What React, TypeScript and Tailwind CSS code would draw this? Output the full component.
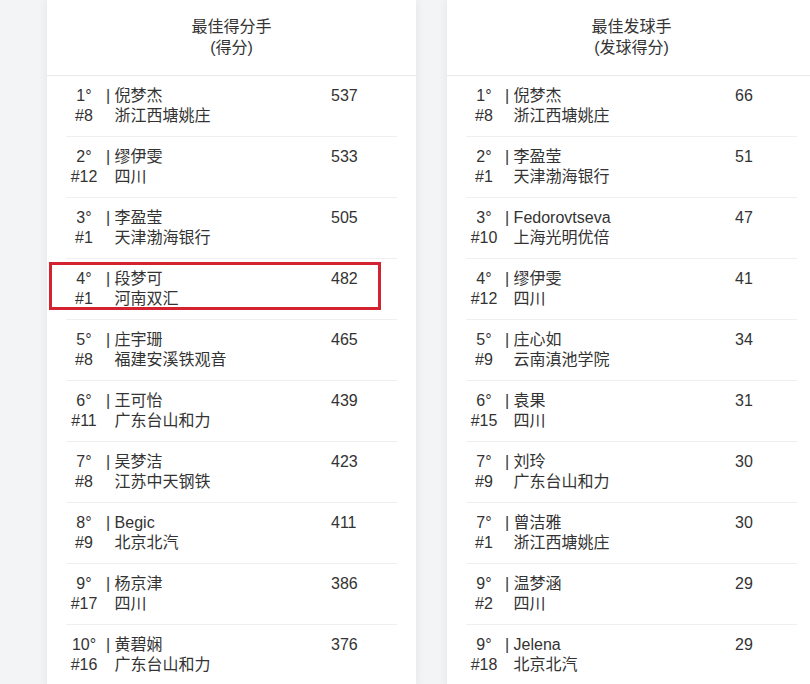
import React from "react";

type Row = { rank: string; num: string; name: string; team: string; score: string; hl?: boolean };

const left: Row[] = [
  { rank: "1°", num: "#8", name: "倪梦杰", team: "浙江西塘姚庄", score: "537" },
  { rank: "2°", num: "#12", name: "缪伊雯", team: "四川", score: "533" },
  { rank: "3°", num: "#1", name: "李盈莹", team: "天津渤海银行", score: "505" },
  { rank: "4°", num: "#1", name: "段梦可", team: "河南双汇", score: "482", hl: true },
  { rank: "5°", num: "#8", name: "庄宇珊", team: "福建安溪铁观音", score: "465" },
  { rank: "6°", num: "#11", name: "王可怡", team: "广东台山和力", score: "439" },
  { rank: "7°", num: "#8", name: "吴梦洁", team: "江苏中天钢铁", score: "423" },
  { rank: "8°", num: "#9", name: "Begic", team: "北京北汽", score: "411" },
  { rank: "9°", num: "#17", name: "杨京津", team: "四川", score: "386" },
  { rank: "10°", num: "#16", name: "黄碧娴", team: "广东台山和力", score: "376" },
];

const right: Row[] = [
  { rank: "1°", num: "#8", name: "倪梦杰", team: "浙江西塘姚庄", score: "66" },
  { rank: "2°", num: "#1", name: "李盈莹", team: "天津渤海银行", score: "51" },
  { rank: "3°", num: "#10", name: "Fedorovtseva", team: "上海光明优倍", score: "47" },
  { rank: "4°", num: "#12", name: "缪伊雯", team: "四川", score: "41" },
  { rank: "5°", num: "#9", name: "庄心如", team: "云南滇池学院", score: "34" },
  { rank: "6°", num: "#15", name: "袁果", team: "四川", score: "31" },
  { rank: "7°", num: "#9", name: "刘玲", team: "广东台山和力", score: "30" },
  { rank: "7°", num: "#1", name: "曾洁雅", team: "浙江西塘姚庄", score: "30" },
  { rank: "9°", num: "#2", name: "温梦涵", team: "四川", score: "29" },
  { rank: "9°", num: "#18", name: "Jelena", team: "北京北汽", score: "29" },
];

function Card({ title, sub, rows, wide }: { title: string; sub: string; rows: Row[]; wide?: boolean }) {
  return (
    <div className="w-[369px] shrink-0 bg-white shadow-[0_0_10px_rgba(0,0,0,0.07)]">
      <div className="h-[76px] border-b border-[#e9e9e9] pt-[16px] text-center leading-[21px]">
        <div>{title}</div>
        <div>{sub}</div>
      </div>
      <div className="px-[19px]">
        {rows.map((r, i) => (
          <div key={i} className="relative flex border-b border-[#efefef] py-[10px] leading-[20px]">
            <div className="w-[36px] shrink-0 text-center">
              <div>{r.rank}</div>
              <div>{r.num}</div>
            </div>
            <div className={wide ? "ml-[3px] w-[230px] shrink-0" : "ml-[4px] w-[225px] shrink-0"}>
              <div className="whitespace-nowrap">
                <span>|</span> {r.name}
              </div>
              <div className="whitespace-nowrap">
                <span className="invisible">|</span> {r.team}
              </div>
            </div>
            <div>{r.score}</div>
            {r.hl && (
              <div className="absolute left-[-17px] top-[3px] h-[48px] w-[332px] border-[3px] border-[#d42330]" />
            )}
          </div>
        ))}
      </div>
    </div>
  );
}

export default function App() {
  return (
    <div
      className="h-[684px] w-[810px] overflow-hidden bg-[#f3f4f6] text-[16px] text-[#333333]"
      style={{ fontFamily: '"Liberation Sans", Arial, "Noto Sans CJK SC", sans-serif' }}
    >
      <div className="flex gap-[31px] pl-[47px]">
        <Card title="最佳得分手" sub="(得分)" rows={left} />
        <Card title="最佳发球手" sub="(发球得分)" rows={right} wide />
      </div>
    </div>
  );
}
